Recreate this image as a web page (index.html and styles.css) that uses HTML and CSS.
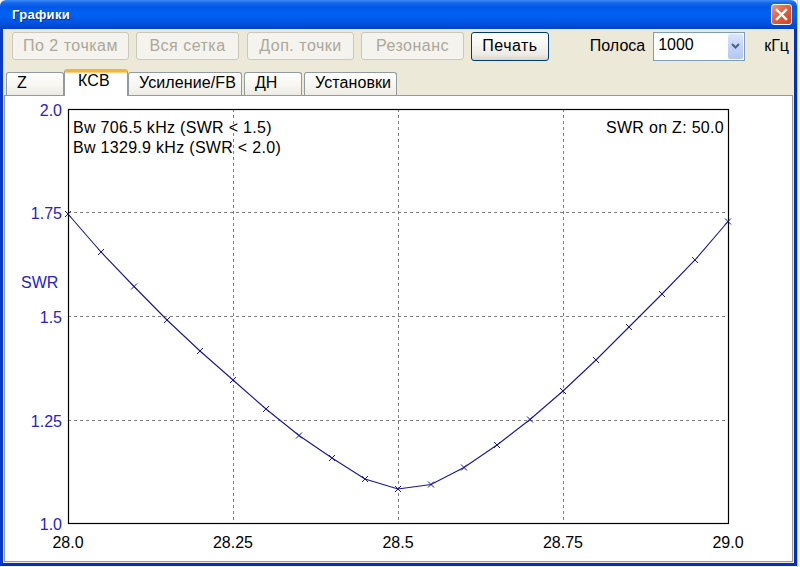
FILE: index.html
```html
<!DOCTYPE html>
<html lang="ru">
<head>
<meta charset="utf-8">
<title>Графики</title>
<link rel="stylesheet" href="styles.css">
</head>
<body>
<div class="desk">
  <div class="window">
    <div class="titlebar">
      <span class="title">Графики</span>
      <span class="close">
        <svg width="19" height="19" viewBox="0 0 19 19"><path d="M5 5 L14 14 M14 5 L5 14" stroke="#fff" stroke-width="2.4" stroke-linecap="square"/></svg>
      </span>
    </div>
    <div class="client">
      <div class="toolbar">
        <button class="btn disabled b-pts">По 2 точкам</button>
        <button class="btn disabled b-grid">Вся сетка</button>
        <button class="btn disabled b-extra">Доп. точки</button>
        <button class="btn disabled b-res">Резонанс</button>
        <button class="btn b-print">Печать</button>
        <div class="band">
          <span class="band-label">Полоса</span>
          <div class="combo">
            <span class="combo-value">1000</span>
            <span class="drop">
              <svg width="15" height="26" viewBox="0 0 15 26"><path d="M4 11 L7.5 14.5 L11 11" fill="none" stroke="#4d6185" stroke-width="2"/></svg>
            </span>
          </div>
          <span class="band-unit">кГц</span>
        </div>
      </div>
      <div class="tabs">
        <div class="tab tab-narrow">Z</div>
        <div class="tab active">КСВ</div>
        <div class="tab">Усиление/FB</div>
        <div class="tab tab-narrow">ДН</div>
        <div class="tab">Установки</div>
      </div>
      <div class="panel">
        <svg class="chart" width="787" height="465" viewBox="5 96 787 465">
          <g class="grid">
            <line x1="233.5" y1="109" x2="233.5" y2="524"/>
            <line x1="398.5" y1="109" x2="398.5" y2="524"/>
            <line x1="563.5" y1="109" x2="563.5" y2="524"/>
            <line x1="68" y1="212.5" x2="728" y2="212.5"/>
            <line x1="68" y1="316.5" x2="728" y2="316.5"/>
            <line x1="68" y1="420.5" x2="728" y2="420.5"/>
          </g>
          <rect class="frame" x="68.5" y="109.5" width="660" height="414"/>
          <polyline class="curve" points="68,214 101,252 134,286.5 167,320 200,351 233,380 266,409 299,435.5 332,458 365,479 398,489 431,484.5 464,467.5 497,445 530,419.5 563,391 596,360 629,327 662,294 695,260 728,221.5"/>
          <path class="marks" d="M65 211l6 6m0-6l-6 6 M98 249l6 6m0-6l-6 6 M131 283.5l6 6m0-6l-6 6 M164 317l6 6m0-6l-6 6 M197 348l6 6m0-6l-6 6 M230 377l6 6m0-6l-6 6 M263 406l6 6m0-6l-6 6 M296 432.5l6 6m0-6l-6 6 M329 455l6 6m0-6l-6 6 M362 476l6 6m0-6l-6 6 M395 486l6 6m0-6l-6 6 M428 481.5l6 6m0-6l-6 6 M461 464.5l6 6m0-6l-6 6 M494 442l6 6m0-6l-6 6 M527 416.5l6 6m0-6l-6 6 M560 388l6 6m0-6l-6 6 M593 357l6 6m0-6l-6 6 M626 324l6 6m0-6l-6 6 M659 291l6 6m0-6l-6 6 M692 257l6 6m0-6l-6 6 M725 218.5l6 6m0-6l-6 6"/>
          <g class="ylabels">
            <text x="62" y="115.5">2.0</text>
            <text x="62" y="219">1.75</text>
            <text x="62" y="322.5">1.5</text>
            <text x="62" y="426.5">1.25</text>
            <text x="62" y="530">1.0</text>
          </g>
          <text class="yname" x="21" y="288">SWR</text>
          <g class="xlabels">
            <text x="68" y="548">28.0</text>
            <text x="233" y="548">28.25</text>
            <text x="398" y="548">28.5</text>
            <text x="563" y="548">28.75</text>
            <text x="728" y="548">29.0</text>
          </g>
          <g class="info">
            <text x="73" y="133">Bw 706.5 kHz (SWR &lt; 1.5)</text>
            <text x="73" y="153">Bw 1329.9 kHz (SWR &lt; 2.0)</text>
            <text class="info-right" x="724" y="133">SWR on Z: 50.0</text>
          </g>
        </svg>
      </div>
    </div>
  </div>
  <div class="behind"></div>
</div>
</body>
</html>
```

FILE: styles.css
```css
html, body {
  margin: 0;
  padding: 0;
}

body {
  width: 800px;
  height: 567px;
  overflow: hidden;
  background: #f2f2f2;
  font-family: "Liberation Sans", Arial, sans-serif;
  font-size: 16px;
}

.desk {
  display: flex;
  height: 567px;
}

.window {
  width: 797px;
  height: 566px;
  display: flex;
  flex-direction: column;
  flex: none;
}

.titlebar {
  height: 29px;
  flex: none;
  box-sizing: border-box;
  display: flex;
  align-items: center;
  justify-content: space-between;
  padding: 0 5px 0 12px;
  border-radius: 6px 6px 0 0;
  background: linear-gradient(to bottom, #3b8cf5 0, #1466ec 3px, #0058e8 7px, #0062f4 14px, #0057e6 21px, #004bd6 26px, #0040c8 29px);
}

.title {
  color: #fff;
  font-weight: bold;
  font-size: 13px;
  text-shadow: 1px 1px 0 #0a2a8c;
  letter-spacing: 0.3px;
}

.close {
  width: 21px;
  height: 21px;
  box-sizing: border-box;
  border: 1px solid #fff;
  border-radius: 3px;
  background: linear-gradient(135deg, #f09a7d 0, #e2603d 45%, #cf4320 100%);
  display: flex;
  align-items: center;
  justify-content: center;
}

.client {
  flex: 1;
  display: flex;
  flex-direction: column;
  background: #ece9d8;
  border: 3px solid #0a3fd6;
  border-top: 0;
  border-left-color: #0839c8;
  border-right-color: #0330b8;
  border-bottom-color: #0330b8;
}

.toolbar {
  margin-top: 3px;
  height: 28px;
  flex: none;
  display: flex;
  align-items: center;
  gap: 7px;
  padding-left: 9px;
  padding-right: 5px;
}

.btn {
  height: 28px;
  box-sizing: border-box;
  font-family: "Liberation Sans", Arial, sans-serif;
  font-size: 16px;
  letter-spacing: 0.5px;
  padding: 0;
  border-radius: 3px;
  text-align: center;
  color: #000;
  border: 1px solid #003c74;
  background: linear-gradient(to bottom, #ffffff 0, #f7f7f3 40%, #ecebe4 80%, #d8d5c8 100%);
}

.btn.disabled {
  color: #aca899;
  border-color: #cac8bb;
  background: #f4f3ee;
}

.b-pts { width: 117px; }
.b-grid { width: 103px; }
.b-extra { width: 107px; margin-left: 1px; }
.b-res { width: 103px; }
.b-print { width: 78px; height: 29px; }

.band {
  margin-left: auto;
  display: flex;
  align-items: center;
}

.band-label {
  margin-right: 8px;
}

.combo {
  width: 92px;
  height: 29px;
  box-sizing: border-box;
  border: 1px solid #7f9db9;
  background: #fff;
  display: flex;
  align-items: center;
  justify-content: space-between;
  padding: 1px 1px 1px 4px;
}

.combo-value {
  padding-bottom: 2px;
}

.drop {
  width: 15px;
  height: 25px;
  display: flex;
  align-items: center;
  justify-content: center;
  border-radius: 2px;
  background: linear-gradient(to bottom, #dbe5fb 0, #c3d4f8 50%, #b3c7f2 100%);
}

.band-unit {
  margin-left: 19px;
}

.tabs {
  margin-top: 9px;
  height: 26px;
  flex: none;
  display: flex;
  align-items: flex-end;
  gap: 2px;
  padding-left: 3px;
  position: relative;
  z-index: 1;
}

.tab {
  height: 23px;
  box-sizing: border-box;
  border: 1px solid #919b9c;
  border-bottom: 0;
  border-radius: 3px 3px 0 0;
  padding: 1px 5px 0 10px;
  line-height: 18px;
  letter-spacing: 0.1px;
  background: linear-gradient(to bottom, #fefefe 0, #f7f6f1 55%, #ecebe3 100%);
  white-space: nowrap;
}

.tab-narrow {
  min-width: 58px;
}

.tab.active {
  height: 27px;
  width: 64px;
  margin: 0 -2px -1px -2px;
  padding: 0 0 0 13px;
  border-top: 3px solid #f6b53a;
  box-shadow: inset 0 1px 0 #ffd27a;
  background: #fff;
  border-radius: 3px 3px 0 0;
}

.panel {
  height: 467px;
  flex: none;
  box-sizing: border-box;
  margin: 0 1px;
  border: 1px solid #919b9c;
  background: #fff;
}

.chart {
  display: block;
  font-family: "Liberation Sans", Arial, sans-serif;
  font-size: 16px;
}

.grid line {
  stroke: #808080;
  stroke-width: 1;
  stroke-dasharray: 3 3;
}

.frame {
  fill: none;
  stroke: #000;
  stroke-width: 1.2;
}

.curve {
  fill: none;
  stroke: #16169a;
  stroke-width: 1.1;
}

.marks {
  fill: none;
  stroke: #16169a;
  stroke-width: 1;
}

.ylabels text {
  fill: #2424c8;
  text-anchor: end;
}

.yname {
  fill: #2424c8;
}

.xlabels text {
  fill: #000;
  text-anchor: middle;
}

.info text {
  fill: #000;
  letter-spacing: 0.3px;
}

.info .info-right {
  text-anchor: end;
}

.behind {
  flex: 1;
  background: #f6f6f6;
  border-left: 1px solid #c8c8c8;
}
```
